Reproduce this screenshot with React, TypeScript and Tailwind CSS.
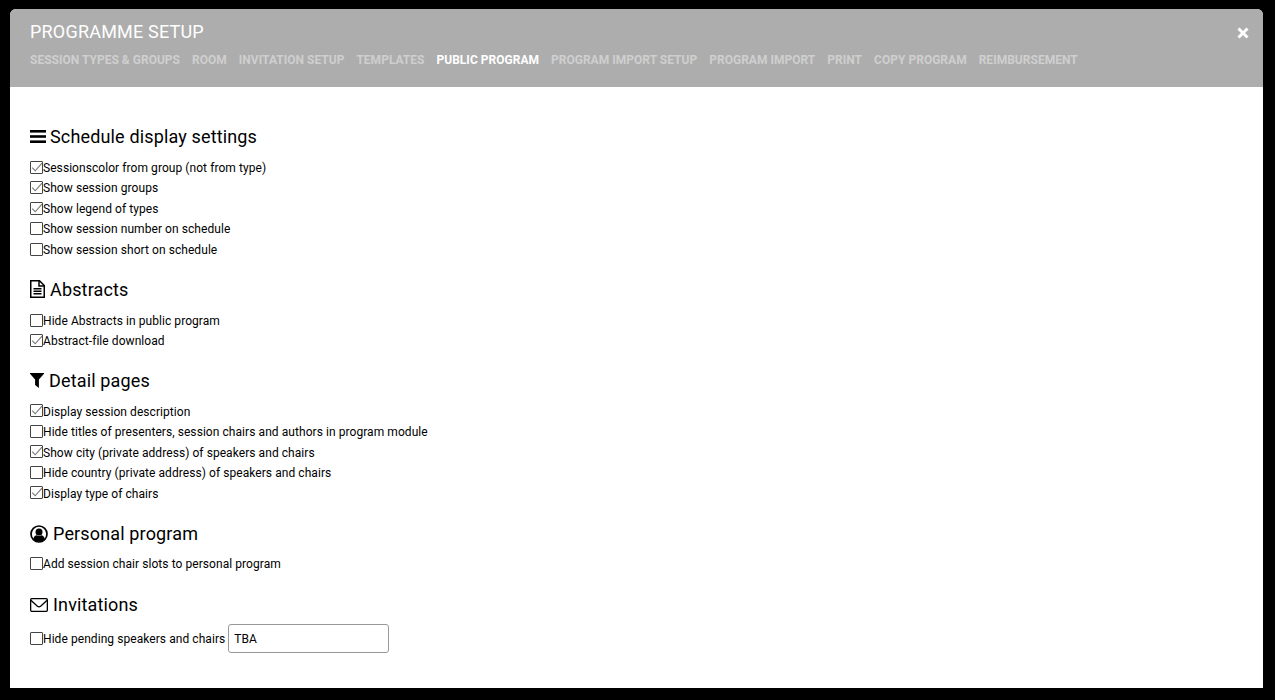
import type { ReactNode } from "react";

const tabs = [
  "Session types & groups",
  "Room",
  "Invitation setup",
  "Templates",
  "Public program",
  "Program import setup",
  "Program import",
  "Print",
  "Copy program",
  "Reimbursement",
];

function BarsIcon() {
  return (
    <svg viewBox="0 0 16 13" className="mr-[4px] h-[13px] w-[16px]" fill="#000">
      <rect x="0" y="0" width="16" height="2.6" />
      <rect x="0" y="5.2" width="16" height="2.6" />
      <rect x="0" y="10.4" width="16" height="2.6" />
    </svg>
  );
}

function FileIcon() {
  return (
    <svg viewBox="0 0 15 18" className="mr-[5px] h-[18px] w-[15px]" fill="none" stroke="#000" strokeWidth="1.5">
      <path d="M0.75 0.75 H9.5 L14.25 5.5 V17.25 H0.75 Z" />
      <path d="M9 0.75 V6 H14.25" />
      <path d="M3.5 8.75 H11.5 M3.5 11.25 H11.5 M3.5 13.75 H11.5" />
    </svg>
  );
}

function FilterIcon() {
  return (
    <svg viewBox="0 0 14 15" className="mr-[5px] h-[15px] w-[14px]" fill="#000">
      <path d="M0 0 H14 V0.8 L8.9 6.6 V15 L5.1 12 V6.6 L0 0.8 Z" />
    </svg>
  );
}

function UserIcon() {
  return (
    <svg viewBox="0 0 18 18" className="mr-[5px] h-[18px] w-[18px]">
      <circle cx="9" cy="9" r="8" fill="none" stroke="#000" strokeWidth="1.7" />
      <circle cx="9" cy="7" r="3.5" fill="#000" />
      <path d="M3.2 14.2 C3.6 11.6 5.4 10.4 6.6 10.2 C8 11 10 11 11.4 10.2 C12.6 10.4 14.4 11.6 14.8 14.2 C13.4 15.8 11.3 16.6 9 16.6 C6.7 16.6 4.6 15.8 3.2 14.2 Z" fill="#000" />
    </svg>
  );
}

function EnvelopeIcon() {
  return (
    <svg viewBox="0 0 18 14" className="mr-[5px] h-[14px] w-[18px]" fill="none" stroke="#000" strokeWidth="1.3">
      <rect x="0.65" y="0.65" width="16.7" height="12.7" rx="1" />
      <path d="M0.9 2.2 L7.4 8.2 C8.4 9 9.6 9 10.6 8.2 L17.1 2.2" />
    </svg>
  );
}

function Check({ label, checked = false }: { label: string; checked?: boolean }) {
  return (
    <label className="flex h-[20.5px] items-center text-[12px] tracking-[0.065px] text-black">
      <span className="relative mb-[1.5px] h-[13px] w-[13px] shrink-0 rounded-[1px] border border-[#444] bg-white">
        {checked && (
          <svg viewBox="0 0 13 13" className="absolute -top-px -left-px h-[13px] w-[13px]" fill="none" stroke="#777" strokeWidth="1.1">
            <path d="M2.3 6.6 L5.2 9.8 L12 2.2" />
          </svg>
        )}
      </span>
      {label}
    </label>
  );
}

function Section({ icon, title, className, headClass, children }: { icon: ReactNode; title: string; className: string; headClass: string; children: ReactNode }) {
  return (
    <section className={className}>
      <h2 className={`flex h-[24px] items-center text-[18px] font-normal tracking-[0.15px] text-black ${headClass}`}>
        {icon}
        {title}
      </h2>
      {children}
    </section>
  );
}

export default function App() {
  return (
    <div className="h-[700px] overflow-hidden bg-black pt-[9px] pl-[10px] pr-[12px] font-['Roboto',sans-serif]">
      <div className="h-[679px] overflow-hidden rounded-t-[6px] bg-white">
        <header className="relative h-[78px] bg-[#adadad] pl-[20px] pt-[11px]">
          <h1 className="text-[18px] leading-[24px] font-normal tracking-[0.2px] text-white">PROGRAMME SETUP</h1>
          <nav className="mt-[7px] flex gap-[12px]">
            {tabs.map((tab) => (
              <a
                key={tab}
                className={`text-[12px] leading-[18px] font-bold tracking-[0.015px] uppercase ${tab === "Public program" ? "text-white" : "text-[#cfcfcf]"}`}
              >
                {tab}
              </a>
            ))}
          </nav>
          <svg viewBox="0 0 12 12" className="absolute top-[18px] right-[14px] h-[12px] w-[12px]" stroke="#fff" strokeWidth="3">
            <path d="M1.5 1.5 L10.5 10.5 M10.5 1.5 L1.5 10.5" />
          </svg>
        </header>

        <main className="px-[20px] pt-[37px]">
          <Section title="Schedule display settings" className="" headClass="mb-[9.6px]" icon={<BarsIcon />}>
            <Check label="Sessionscolor from group (not from type)" checked />
            <Check label="Show session groups" checked />
            <Check label="Show legend of types" checked />
            <Check label="Show session number on schedule" />
            <Check label="Show session short on schedule" />
          </Section>

          <Section title="Abstracts" className="mt-[17.4px]" headClass="mb-[9.2px]" icon={<FileIcon />}>
            <Check label="Hide Abstracts in public program" />
            <Check label="Abstract-file download" checked />
          </Section>

          <Section title="Detail pages" className="mt-[17px]" headClass="mb-[8.6px]" icon={<FilterIcon />}>
            <Check label="Display session description" checked />
            <Check label="Hide titles of presenters, session chairs and authors in program module" />
            <Check label="Show city (private address) of speakers and chairs" checked />
            <Check label="Hide country (private address) of speakers and chairs" />
            <Check label="Display type of chairs" checked />
          </Section>

          <Section title="Personal program" className="mt-[18px]" headClass="mb-[8px]" icon={<UserIcon />}>
            <Check label="Add session chair slots to personal program" />
          </Section>

          <Section title="Invitations" className="mt-[18.6px]" headClass="mb-[9.6px]" icon={<EnvelopeIcon />}>
            <div className="-mt-[2px] flex items-center">
              <Check label="Hide pending speakers and chairs" />
              <input
                defaultValue="TBA"
                className="ml-[3px] h-[29px] w-[161px] rounded-[3px] border border-[#999] bg-white px-[5px] text-[12px] text-black outline-none"
              />
            </div>
          </Section>
        </main>
      </div>
    </div>
  );
}
